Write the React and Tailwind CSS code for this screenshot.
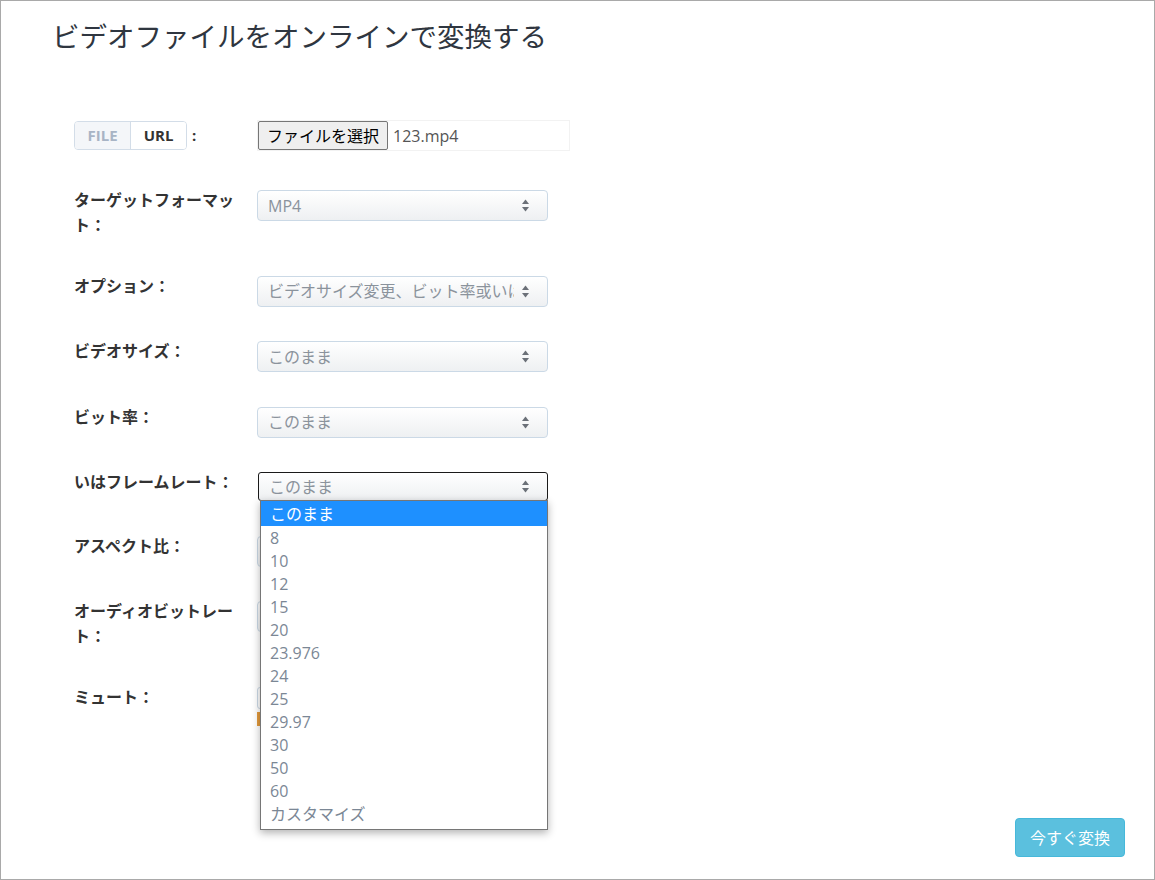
import React from 'react';

const FONT = { fontFamily: '"Open Sans", "Noto Sans CJK JP", sans-serif' };

const frameOptions = ['8', '10', '12', '15', '20', '23.976', '24', '25', '29.97', '30', '50', '60', 'カスタマイズ'];

function Arrows() {
    return (
        <svg width="9" height="13" viewBox="0 0 9 13" className="shrink-0">
            <path d="M4.5 0.5 L8 5 L1 5 Z" fill="#6b7078" />
            <path d="M1 8 L8 8 L4.5 12.5 Z" fill="#6b7078" />
        </svg>
    );
}

function Select({ value, focused }) {
    return (
        <div
            className={
                focused
                    ? 'flex h-[29px] w-[290px] items-center justify-between rounded-[3px] border border-[#1a1a1a] bg-linear-to-b from-white to-[#eef0f2] pl-[10px] pr-[17px] text-[16px] text-[#8b939c]'
                    : 'flex h-[31px] w-[291px] items-center justify-between rounded-[4px] border border-[#cbd9e6] bg-linear-to-b from-white to-[#eef0f2] pl-[10px] pr-[17px] text-[16px] text-[#8b939c]'
            }
        >
            <span className="w-[246px] overflow-hidden whitespace-nowrap">{value}</span>
            <Arrows />
        </div>
    );
}

function Row({ label, children }) {
    return (
        <div className="mb-[32.4px] flex items-start">
            <div className="w-[183px] pb-[3.6px] pr-[15px] text-[16px] font-bold leading-[25px] text-[#333]">{label}</div>
            <div className="relative mt-[2px]">{children}</div>
        </div>
    );
}

export default function App() {
    return (
        <div style={FONT} className="flex h-[880px] w-[1155px] flex-col border border-[#a9a9a9] bg-white">
            <h1 className="pl-[51px] pt-[18px] text-[27.5px] font-normal leading-[36px] text-[#2f3640]">
                ビデオファイルをオンラインで変換する
            </h1>

            <div className="pl-[73px] pt-[66px]">
                {/* source */}
                <div className="mb-[38px] flex h-[29px] items-center">
                    <div className="flex h-[29px] w-[113px] overflow-hidden rounded-[4px] border border-[#d3dde8] text-[15px] font-bold">
                        <div className="flex w-[56px] items-center justify-center border-r border-[#d3dde8] bg-[#f4f6f9] text-[#a8b4c5]">FILE</div>
                        <div className="flex flex-1 items-center justify-center bg-white text-[#333]">URL</div>
                    </div>
                    <span className="ml-[5px] w-[65px] text-[15px] font-bold text-[#333]">:</span>
                    <div className="flex h-[31px] w-[313px] items-center border border-[#f2f2f2]">
                        <div className="flex h-[29px] w-[130px] items-center justify-center rounded-[2px] border border-[#767676] bg-[#efefef] text-[16px] text-black">
                            ファイルを選択
                        </div>
                        <span className="ml-[5px] text-[16px] text-[#555]">123.mp4</span>
                    </div>
                </div>

                <Row label="ターゲットフォーマット：">
                    <Select value="MP4" />
                </Row>
                <Row label="オプション：">
                    <Select value="ビデオサイズ変更、ビット率或いはフレームレート" />
                </Row>
                <Row label="ビデオサイズ：">
                    <Select value="このまま" />
                </Row>
                <Row label="ビット率：">
                    <Select value="このまま" />
                </Row>
                <Row label="いはフレームレート：">
                    <div className="pl-[1px]">
                        <Select value="このまま" focused />
                    </div>
                    <div className="absolute left-[3px] top-[28px] z-10 w-[288px] border border-[#767676] bg-white pb-[4px] text-[16px] text-[#7b8795] shadow-[0_3px_8px_rgba(0,0,0,0.3)]">
                        <div className="flex h-[25px] items-center bg-[#1e90ff] pl-[9px] text-white">このまま</div>
                        {frameOptions.map((o) => (
                            <div key={o} className="flex h-[23px] items-center pl-[9px]">{o}</div>
                        ))}
                    </div>
                </Row>
                <Row label="アスペクト比：">
                    <Select value="このまま" />
                </Row>
                <Row label="オーディオビットレート：">
                    <Select value="このまま" />
                </Row>
                <Row label="ミュート：">
                    <div className="h-[22px] w-[60px] rounded-[3px] border border-[#cbd9e6] bg-white" />
                    <div className="mt-[3px] h-[14px] w-[3px] bg-[#e39a3c]" />
                </Row>
            </div>

            <div className="flex-1" />
            <div className="flex justify-end pb-[22px] pr-[29px]">
                <button className="h-[39px] w-[110px] rounded-[4px] border border-[#46b8da] bg-[#5bc0de] text-[16px] text-white">
                    今すぐ変換
                </button>
            </div>
        </div>
    );
}
